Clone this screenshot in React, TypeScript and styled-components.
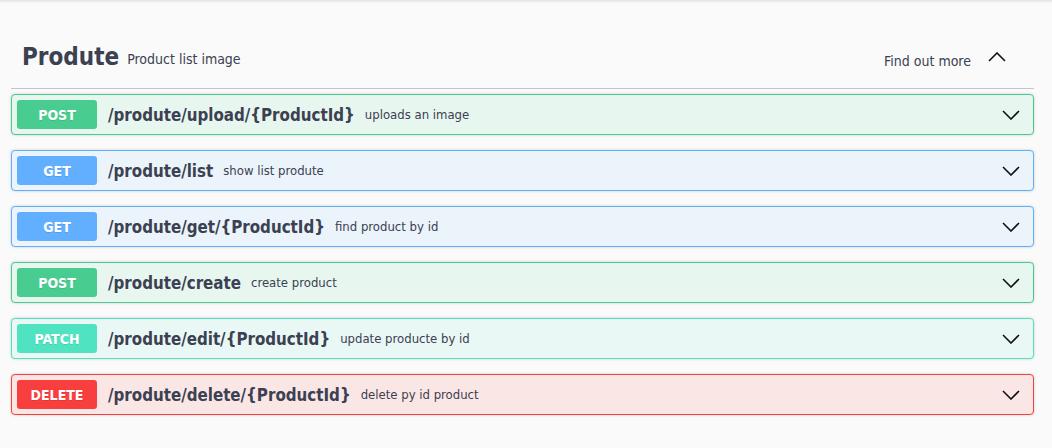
import React from "react";
import styled, { createGlobalStyle } from "styled-components";

const GlobalStyle = createGlobalStyle`
  html, body {
    margin: 0;
    padding: 0;
    background: #fafafa;
  }
  body {
    font-family: "DejaVu Sans Condensed", "DejaVu Sans", sans-serif;
    font-stretch: condensed;
    color: #3b4151;
  }
`;

type Method = "POST" | "GET" | "PATCH" | "DELETE";

const colors: Record<Method, { main: string; bg: string }> = {
  POST: { main: "#49cc90", bg: "#e8f6f0" },
  GET: { main: "#61affe", bg: "#ebf3fb" },
  PATCH: { main: "#50e3c2", bg: "#e9f8f5" },
  DELETE: { main: "#f93e3e", bg: "#fbe6e6" },
};

const Page = styled.div`
  min-height: 448px;
  box-sizing: border-box;
  border-top: 1px solid #e6e6e6;
  box-shadow: inset 0 3px 2px -2px rgba(0, 0, 0, 0.08);
  padding: 30px 18px 0 11px;
`;

const TagHeader = styled.div`
  display: flex;
  align-items: center;
  height: 58px;
  box-sizing: border-box;
  padding: 0 28px 5px 11px;
  border-bottom: 1px solid #c4c5c9;
  margin-bottom: 5px;
`;

const TagTitle = styled.h3`
  margin: 0;
  font-size: 24px;
  font-weight: bold;
  line-height: 1;
`;

const TagDesc = styled.small`
  flex: 1;
  font-size: 14px;
  padding-left: 8px;
  padding-top: 3px;
`;

const FindMore = styled.a`
  font-size: 14px;
  color: #3b4151;
  text-decoration: none;
  margin-right: 17px;
  padding-top: 8px;
`;

const Block = styled.div<{ $method: Method }>`
  display: flex;
  align-items: center;
  padding: 5px;
  margin-bottom: 15px;
  border: 1px solid ${(p) => colors[p.$method].main};
  background: ${(p) => colors[p.$method].bg};
  border-radius: 4px;
  box-shadow: 0 0 3px rgba(0, 0, 0, 0.19);
`;

const Badge = styled.span<{ $method: Method }>`
  width: 80px;
  height: 29px;
  display: flex;
  align-items: center;
  justify-content: center;
  border-radius: 3px;
  background: ${(p) => colors[p.$method].main};
  color: #fff;
  font-size: 14px;
  font-weight: bold;
  text-shadow: 0 1px 0 rgba(0, 0, 0, 0.1);
`;

const Path = styled.span`
  font-size: 16.8px;
  font-weight: bold;
  padding: 0 10px 0 11px;
`;

const Summary = styled.span`
  flex: 1;
  font-size: 13px;
`;

const Arrow = styled.svg<{ $gap: number }>`
  margin-right: ${(p) => p.$gap}px;
`;

const Chevron = ({ up }: { up?: boolean }) => (
  <Arrow width="18" height="10" viewBox="0 0 18 10" $gap={up ? 0 : 8}>
    <path
      d={up ? "M1 9 L9 1 L17 9" : "M1 1 L9 9 L17 1"}
      fill="none"
      stroke="#111"
      strokeWidth="1.6"
    />
  </Arrow>
);

const ops: { method: Method; path: string; summary: string }[] = [
  { method: "POST", path: "/produte/upload/{ProductId}", summary: "uploads an image" },
  { method: "GET", path: "/produte/list", summary: "show list produte" },
  { method: "GET", path: "/produte/get/{ProductId}", summary: "find product by id" },
  { method: "POST", path: "/produte/create", summary: "create product" },
  { method: "PATCH", path: "/produte/edit/{ProductId}", summary: "update producte by id" },
  { method: "DELETE", path: "/produte/delete/{ProductId}", summary: "delete py id product" },
];

export default function App() {
  return (
    <>
      <GlobalStyle />
      <Page>
        <TagHeader>
          <TagTitle>Produte</TagTitle>
          <TagDesc>Product list image</TagDesc>
          <FindMore href="#">Find out more</FindMore>
          <Chevron up />
        </TagHeader>
        {ops.map((op, i) => (
          <Block key={i} $method={op.method}>
            <Badge $method={op.method}>{op.method}</Badge>
            <Path>{op.path}</Path>
            <Summary>{op.summary}</Summary>
            <Chevron />
          </Block>
        ))}
      </Page>
    </>
  );
}
